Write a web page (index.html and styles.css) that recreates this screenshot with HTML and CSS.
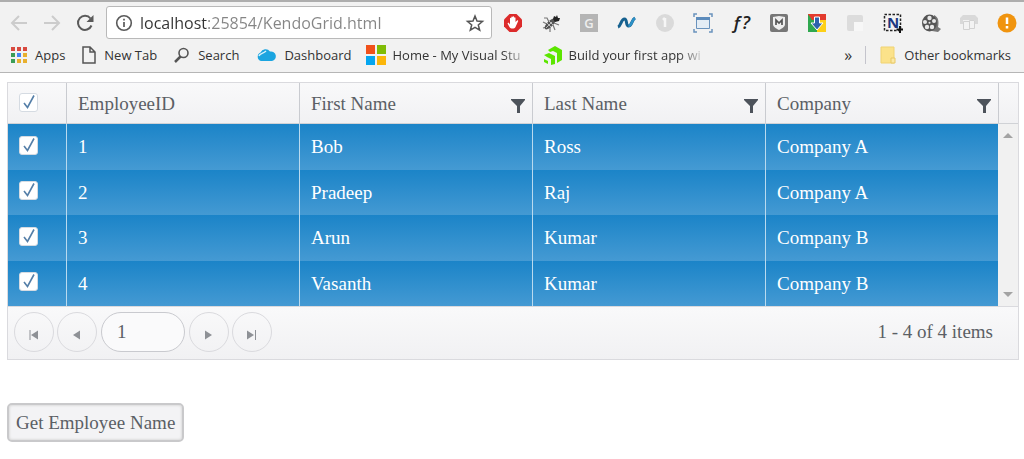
FILE: index.html
```html
<!DOCTYPE html>
<html lang="en">
<head>
    <meta charset="UTF-8">
    <meta name="viewport" content="width=device-width, initial-scale=1.0">
    <title>Kendo Grid</title>
    <link rel="stylesheet" href="styles.css">
</head>
<body>
    <header class="browser">
        <div class="toolbar">
            <nav class="history">
                <button type="button" aria-label="Back"><svg width="18" height="18" viewBox="0 0 18 18"><path d="M17 9H3M9 2L2 9l7 7" fill="none" stroke="#ccc" stroke-width="2"/></svg></button>
                <button type="button" aria-label="Forward"><svg width="18" height="18" viewBox="0 0 18 18"><path d="M1 9h14M9 2l7 7-7 7" fill="none" stroke="#ccc" stroke-width="2"/></svg></button>
                <button type="button" aria-label="Reload"><svg width="18" height="18" viewBox="0 0 18 18"><path d="M15.500 11.500A7 7 0 1 1 14.500 4.500" fill="none" stroke="#5a5a5a" stroke-width="2"/><path d="M17.500 1v7h-7z" fill="#5a5a5a"/></svg></button>
            </nav>
            <div class="address">
                <svg width="18" height="18" viewBox="0 0 18 18"><circle cx="9" cy="9" r="7.300" fill="none" stroke="#5a5a5a" stroke-width="1.600"/><path d="M9 8v5M9 4.800v1.700" stroke="#5a5a5a" stroke-width="1.700"/></svg>
                <input type="text" class="url" aria-label="Address" value="localhost:25854/KendoGrid.html">
                <button type="button" aria-label="Bookmark this page"><svg width="18" height="18" viewBox="0 0 18 18"><path d="M9 2l2 5 5.500.400-4.200 3.500 1.400 5.300L9 13.300l-4.700 2.900 1.400-5.300L1.500 7.400 7 7z" fill="none" stroke="#555" stroke-width="1.500"/></svg></button>
            </div>
            <div class="extensions">
                <svg width="20" height="20" viewBox="0 0 20 20"><path d="M6.500 1h7L19 6.500v7L13.500 19h-7L1 13.500v-7z" fill="#dc2b2b"/><path d="M5.500 9.500l1.500 2V5.500c0-1 1.300-1 1.300 0V4.300c0-1 1.400-1 1.400 0V4c0-1 1.400-1 1.400 0v1c0-1 1.400-1 1.400 0v4l1.500-1.500c1-.500 1.500.300 1 1L12.500 14c-1 2-5 2-6 0L4.500 10.500z" fill="#fff"/></svg>
                <svg width="20" height="20" viewBox="0 0 20 20"><g stroke="#777" stroke-width="1.200" fill="none"><path d="M8 9L6 5 3 5M6 11L2 9M6 14l-4 1M9 14l0 5M12 12l2 5M13 10l5 2"/></g><ellipse cx="9" cy="11" rx="7" ry="3" transform="rotate(-45 9 11)" fill="#555"/><path d="M5 15l6-6M8 8l4 4M6 10l4 4" stroke="#bbb"/><path d="M13 3l2 1 1-2 1 3 2 0-1 3-4 1-2-3z" fill="#222"/></svg>
                <svg width="20" height="20" viewBox="0 0 20 20"><path d="M1 1h18v18H1z" fill="#b5b5b5"/><text x="10" y="15" text-anchor="middle" class="glyph" fill="#eee">G</text></svg>
                <svg width="20" height="20" viewBox="0 0 20 20"><path d="M1 14c3-1 3-8 6.500-8 3 0 1 7 4 7 3.500 0 3-6 6.500-8" fill="none" stroke="#16618f" stroke-width="3"/><path d="M11.500 13c3.500 0 3-6 6.500-8" fill="none" stroke="#2c91c7" stroke-width="2.500"/></svg>
                <svg width="20" height="20" viewBox="0 0 20 20"><circle cx="10" cy="10" r="9" fill="#dadada"/><path d="M10 5v9M8 7l2-2" fill="none" stroke="#f6f6f6" stroke-width="2.500"/></svg>
                <svg width="20" height="20" viewBox="0 0 20 20"><path d="M3.500 4.500h13v11h-13z" fill="#e4edf5" stroke="#6a93bd"/><path d="M3 4h14v3H3z" fill="#5d8cbc"/><path d="M1 4V1h3M16 1h3v3M19 16v3h-3M4 19H1v-3" fill="none" stroke="#6a93bd" stroke-width="1.500"/></svg>
                <svg width="20" height="20" viewBox="0 0 20 20"><text x="10" y="16" text-anchor="middle" class="glyph glyph-function" fill="#222">ƒ?</text></svg>
                <svg width="20" height="20" viewBox="0 0 20 20"><rect x="1" y="1" width="18" height="18" rx="2" fill="#777"/><path d="M4 4l6-1 6 1v7c0 3-3 4.500-6 6-3-1.500-6-3-6-6z" fill="#eee"/><path d="M7 12V7l3 3 3-3v5" fill="none" stroke="#555" stroke-width="1.700"/></svg>
                <svg width="20" height="20" viewBox="0 0 20 20"><path d="M1 1h18v9H1z" fill="#e33b2e"/><path d="M1 1l9 9v9H1z" fill="#2fa84f"/><path d="M10 10l9-8v17h-9z" fill="#fdd017"/><path d="M1 1h18v6H5z" fill="#e33b2e"/><path d="M7.500 4h5v6H16l-6 7-6-7h3.500z" fill="#2e62ad" stroke="#fff"/></svg>
                <svg width="20" height="20" viewBox="0 0 20 20"><rect x="2" y="2" width="16" height="16" rx="2" fill="#dcdcdc"/><path d="M9 9h9v9H9z" fill="#f7f7f7"/></svg>
                <svg width="20" height="20" viewBox="0 0 20 20"><path d="M1.500 1.500h16v16h-16z" fill="none" stroke="#222" stroke-width="1.500" stroke-dasharray="2.500 1.500"/><text x="10" y="15" text-anchor="middle" class="glyph glyph-bold" fill="#1c3780">N</text><path d="M17 13v7M13.500 16.500h6.500" stroke="#111" stroke-width="2"/></svg>
                <svg width="20" height="20" viewBox="0 0 20 20"><path d="M13 2c5 2 5 8 4 12l3 2-3 3-6-1z" fill="#777"/><ellipse cx="8.500" cy="10" rx="7.500" ry="8.500" fill="#555"/><g fill="#e8e8e8"><circle cx="8.500" cy="5" r="2.200"/><circle cx="4" cy="9" r="2"/><circle cx="6" cy="14" r="2.200"/><circle cx="11" cy="14" r="2.200"/><circle cx="13" cy="8" r="2"/><circle cx="8.500" cy="9.800" r="1"/></g></svg>
                <svg width="20" height="20" viewBox="0 0 20 20"><path d="M1 11V5l3-3h12l3 3v6h-3V7H4v4z" fill="#d9d9d9"/><path d="M4.500 8.500h6v8h-6zM10.500 7.500h5v8h-5z" fill="#f3f3f3" stroke="#d2d2d2"/></svg>
                <svg width="20" height="20" viewBox="0 0 20 20"><circle cx="10" cy="10" r="9.500" fill="#f0940f"/><path d="M10 4.500v6.500M10 13v2.500" stroke="#fff" stroke-width="2.500"/></svg>
            </div>
        </div>
        <nav class="bookmarks">
            <a href="#"><svg width="16" height="16" viewBox="0 0 16 16"><path d="M0 0h4v4H0zM6 0h4v4H6zM12 0h4v4h-4z" fill="#d84a3f"/><path d="M0 6h4v4H0zM0 12h4v4H0z" fill="#3b9e57"/><path d="M6 6h4v4H6z" fill="#4285f4"/><path d="M12 6h4v4h-4zM6 12h4v4H6zM12 12h4v4h-4z" fill="#e8b02e"/></svg><span>Apps</span></a>
            <a href="#"><svg width="14" height="18" viewBox="0 0 14 18"><path d="M1 1h7l5 5v11H1zM8 1v5h5" fill="none" stroke="#555" stroke-width="1.500"/></svg><span>New Tab</span></a>
            <a href="#"><svg width="16" height="16" viewBox="0 0 16 16"><circle cx="9.500" cy="6" r="4.500" fill="none" stroke="#555" stroke-width="1.600"/><path d="M6.500 9.500L1 15" stroke="#555" stroke-width="2.500"/></svg><span>Search</span></a>
            <a href="#"><svg width="20" height="16" viewBox="0 0 20 16"><path d="M5 14a4.500 4.500 0 0 1-.500-8.500A5.500 5.500 0 0 1 14 4.500a4.500 4.500 0 0 1 2 9.500z" fill="#1ba5e0"/><path d="M3 9C4 6 7 7 10 4" fill="none" stroke="#d8f1fb" stroke-width="1.500"/></svg><span>Dashboard</span></a>
            <a href="#" class="long"><svg width="20" height="20" viewBox="0 0 20 20"><path d="M0 0h9v9H0z" fill="#f1511b"/><path d="M11 0h9v9h-9z" fill="#80bc06"/><path d="M0 11h9v9H0z" fill="#05a6f0"/><path d="M11 11h9v9h-9z" fill="#fbb60a"/></svg><span>Home - My Visual Stu</span></a>
            <a href="#" class="long"><svg width="18" height="19" viewBox="0 0 18 19"><path d="M4 4l7-4 7 4v10l-5 3V7L9 5 6 6z" fill="#5ce500"/><path d="M0 9l5-2 6 3v8l-4 1v-6l-4-2z" fill="#5ce500"/><path d="M0 13l4 2v3l-4-2z" fill="#5ce500"/></svg><span>Build your first app wi</span></a>
            <button type="button" class="more" aria-label="More bookmarks">»</button>
            <a href="#" class="other"><svg width="16" height="18" viewBox="0 0 16 18"><path d="M1 1h13v16H1z" fill="#fbe28a" stroke="#f0d373"/><path d="M11 12h4v5h-4z" fill="#fbe9a5" stroke="#e8c866"/></svg><span>Other bookmarks</span></a>
        </nav>
    </header>

    <main>
        <section class="grid">
            <div class="grid-header">
                <table>
                    <colgroup><col class="check-col"><col><col><col><col></colgroup>
                    <thead>
                        <tr>
                            <th><input type="checkbox" aria-label="Select all" checked></th>
                            <th>EmployeeID</th>
                            <th><div class="filterable">First Name <button type="button" aria-label="Filter first name"><svg width="16" height="16" viewBox="0 0 16 16"><path d="M1 1h14v1L10 8v7H7V8L1 2z" fill="#4d535b"/></svg></button></div></th>
                            <th><div class="filterable">Last Name <button type="button" aria-label="Filter last name"><svg width="16" height="16" viewBox="0 0 16 16"><path d="M1 1h14v1L10 8v7H7V8L1 2z" fill="#4d535b"/></svg></button></div></th>
                            <th><div class="filterable">Company <button type="button" aria-label="Filter company"><svg width="16" height="16" viewBox="0 0 16 16"><path d="M1 1h14v1L10 8v7H7V8L1 2z" fill="#4d535b"/></svg></button></div></th>
                        </tr>
                    </thead>
                </table>
            </div>
            <div class="grid-content">
                <table>
                    <colgroup><col class="check-col"><col><col><col><col></colgroup>
                    <tbody>
                        <tr><td><input type="checkbox" aria-label="Select employee 1" checked></td><td>1</td><td>Bob</td><td>Ross</td><td>Company A</td></tr>
                        <tr><td><input type="checkbox" aria-label="Select employee 2" checked></td><td>2</td><td>Pradeep</td><td>Raj</td><td>Company A</td></tr>
                        <tr><td><input type="checkbox" aria-label="Select employee 3" checked></td><td>3</td><td>Arun</td><td>Kumar</td><td>Company B</td></tr>
                        <tr><td><input type="checkbox" aria-label="Select employee 4" checked></td><td>4</td><td>Vasanth</td><td>Kumar</td><td>Company B</td></tr>
                    </tbody>
                </table>
                <div class="scrollbar">
                    <svg width="10" height="6" viewBox="0 0 10 6"><path d="M0 6l5-5 5 5z" fill="#a3a3a3"/></svg>
                    <svg width="10" height="6" viewBox="0 0 10 6"><path d="M0 0l5 5 5-5z" fill="#a3a3a3"/></svg>
                </div>
            </div>
            <div class="pager">
                <button type="button" aria-label="First page"><svg width="12" height="12" viewBox="0 0 12 12"><path d="M2 1v10" stroke="#8e9196"/><path d="M10 1.500v9L3 6z" fill="#8e9196"/></svg></button>
                <button type="button" aria-label="Previous page"><svg width="12" height="12" viewBox="0 0 12 12"><path d="M9 1.500v9L2 6z" fill="#8e9196"/></svg></button>
                <input type="text" aria-label="Page" value="1">
                <button type="button" aria-label="Next page"><svg width="12" height="12" viewBox="0 0 12 12"><path d="M2 1.500v9L9 6z" fill="#8e9196"/></svg></button>
                <button type="button" aria-label="Last page"><svg width="12" height="12" viewBox="0 0 12 12"><path d="M9.500 1v10" stroke="#8e9196"/><path d="M1 1.500v9L8 6z" fill="#8e9196"/></svg></button>
                <span class="pager-info">1 - 4 of 4 items</span>
            </div>
        </section>

        <button type="button" class="k-button">Get Employee Name</button>
    </main>
</body>
</html>
```
FILE: styles.css
```css
* { box-sizing: border-box; }
body { margin: 0; background: #fff; color: #5b5f65; font-family: "Liberation Serif", "Times New Roman", serif; font-size: 19px; }
button { padding: 0; border: 0; background: none; color: inherit; font: inherit; cursor: pointer; }
svg { display: block; flex: none; overflow: visible; }
a { color: inherit; text-decoration: none; }

/* Browser bars */
.browser { background: #f2f2f2; border-top: 2px solid #aeaeae; border-bottom: 1px solid #b6b6b6; font-family: "Open Sans", sans-serif; }
.toolbar { display: flex; align-items: center; padding: 4px 7px 0 10px; }
.history { display: flex; gap: 15px; margin-right: 12px; }
.address { flex: 1; display: flex; align-items: center; gap: 7px; height: 33px; padding: 0 7px 0 8px; background: #fff; border: 1px solid #b9b9b9; border-radius: 3px; }
.url { flex: 1; min-width: 0; height: 28px; padding: 0; border: 0; outline: 0; font-family: "Open Sans", sans-serif; font-size: 16px; color: transparent; background: linear-gradient(90deg, #333 68px, #858585 68px); -webkit-background-clip: text; background-clip: text; }
.extensions { display: flex; gap: 18px; margin-left: 11px; }
.glyph { font-family: "Open Sans", sans-serif; font-size: 13px; font-weight: 600; }
.glyph-bold { font-size: 15px; font-weight: 700; }
.glyph-function { font-family: "Open Sans", sans-serif; font-size: 18px; font-style: italic; font-weight: 600; }

.bookmarks { display: flex; align-items: center; gap: 17px; height: 33px; padding: 0 13px 1px 11px; font-size: 13px; color: #333; }
.bookmarks a { display: flex; align-items: center; gap: 8px; white-space: nowrap; }
.bookmarks .long { gap: 6px; margin-left: -2px; }
.bookmarks .long span { min-width: 137px; -webkit-mask-image: linear-gradient(90deg, #000 110px, transparent 138px); mask-image: linear-gradient(90deg, #000 110px, transparent 138px); }
.bookmarks .more { margin-left: auto; margin-right: -4px; font-size: 16px; }
.bookmarks .other { padding-left: 14px; border-left: 1px solid #c4c4cc; }

/* Grid */
main { padding: 9px 5px 16px 7px; }
.grid { border: 1px solid #dadade; }
.grid table { width: 100%; table-layout: fixed; border-collapse: separate; border-spacing: 0; }
.check-col { width: 58px; }
.grid th, .grid td { padding: 0 11px; text-align: left; font-weight: 400; border-left: 1px solid #c9cbd0; }
.grid th:first-child, .grid td:first-child { border-left: 0; }
.grid-header { padding-right: 19px; background: linear-gradient(#f9f9fa, #f1f1f3); border-bottom: 1px solid #d0d2d6; }
.grid-header table { border-right: 1px solid #c9cbd0; }
.grid-header th { height: 40px; padding-right: 6px; padding-top: 2px; }
.filterable { display: flex; align-items: center; justify-content: space-between; }
.filterable svg { margin-top: 3px; }
.grid-content { display: flex; height: 182px; }
.grid-content table { flex: 1; height: 100%; color: #fff; }
.grid-content tr { background: linear-gradient(#1b84c8, #459ad3); }
.grid-content td { border-left-color: #b9daef; padding-top: 1px; }
.scrollbar { display: flex; flex-direction: column; justify-content: space-between; align-items: center; width: 20px; padding: 8px 0; background: #f1f1f1; }

input[type="checkbox"] { display: block; appearance: none; width: 19px; height: 19px; margin: 0 0 4px; border: 1px solid #d5dbe2; border-radius: 3px; background: #fff; }
input[type="checkbox"]:checked { background: #fff url("data:image/svg+xml,%3Csvg xmlns='http://www.w3.org/2000/svg' viewBox='0 0 17 17'%3E%3Cpath d='M4 9l3.500 4.500L14 1.500' fill='none' stroke='%23557fa8' stroke-width='1.600'/%3E%3C/svg%3E") center / 17px no-repeat; }

.pager { display: flex; align-items: center; height: 53px; padding: 0 25px 2px 6px; gap: 3px; background: linear-gradient(#f9f9fa, #f1f1f3); border-top: 1px solid #dadade; }
.pager button { display: flex; align-items: center; justify-content: center; width: 40px; height: 40px; padding-top: 5px; border: 1px solid #dadade; border-radius: 50%; }
.pager input { width: 84px; height: 40px; margin: 0 1px; padding: 0 15px; border: 1px solid #c9cacf; border-radius: 20px; background: #fafafb; color: inherit; font: inherit; }
.pager-info { margin-left: auto; }

.k-button { display: block; height: 39px; margin-top: 43px; padding: 1px 7px 0; border: 2px solid #c9c9cb; border-radius: 5px; background: #f3f3f5; box-shadow: inset 0 0 2px 1px #ddd; }
```
